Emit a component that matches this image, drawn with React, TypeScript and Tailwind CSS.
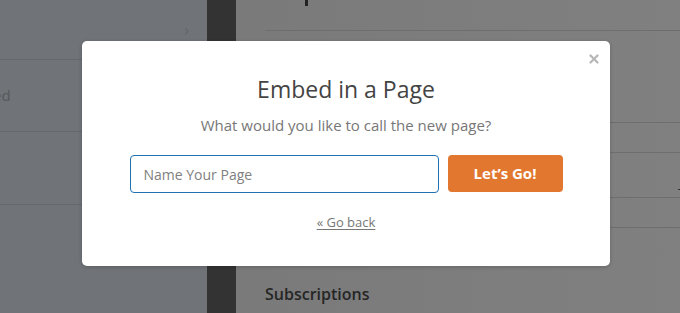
import { X } from 'lucide-react';

const font = { fontFamily: '"Open Sans", "Noto Sans", sans-serif' };

export default function App() {
  return (
    <div className="relative h-[313px] w-[680px] overflow-hidden" style={font}>
      {/* page behind the overlay */}
      <div className="flex h-full w-full">
        {/* left settings panel */}
        <div className="flex w-[207px] flex-col bg-[#707478]">
          <div className="flex h-[60px] items-center justify-end border-b border-[#65686c] pr-[18px]">
            <span className="text-[16px] leading-none text-[#60636a]">›</span>
          </div>
          <div className="flex h-[72px] items-center border-b border-[#65686c]">
            <span className="-ml-[7px] text-[15px] text-[#55585c]">ed</span>
          </div>
          <div className="h-[73px] border-b border-[#65686c]" />
          <div className="flex-1" />
        </div>

        {/* dark sidebar strip */}
        <div className="w-[29px] bg-[#333333]" />

        {/* right content */}
        <div className="flex flex-1 flex-col bg-gradient-to-r from-[#7a7a7a] to-[#808080]">
          <div className="ml-[29px] h-[31px] border-b border-[#6e6e6e]">
            <div className="ml-[40px] h-[6px] w-[3px] bg-[#222]" />
          </div>
          <div className="ml-[29px] h-[92px] border-b border-[#6e6e6e]" />
          <div className="ml-[29px] h-[30px] border-b border-[#6e6e6e]" />
          <div className="ml-[29px] flex h-[45px] items-center justify-end border-b border-[#6e6e6e]">
            <span className="mt-[28px] -mr-[2px] h-[1px] w-[4px] bg-[#333]" />
          </div>
          <div className="ml-[29px] h-[30px] border-b border-[#6e6e6e]" />
          <div className="ml-[29px] pt-[54px] text-[16px] font-semibold text-[#262626]">
            Subscriptions
          </div>
        </div>
      </div>

      {/* modal */}
      <div className="absolute left-[82px] top-[41px] flex h-[225px] w-[528px] flex-col items-center rounded-[5px] bg-white shadow-[0_1px_4px_rgba(0,0,0,0.2)]">
        <button className="absolute right-[9px] top-[11px] text-[#b8b8b8]">
          <X size={14} strokeWidth={4} />
        </button>
        <h2 className="mt-[32px] text-[23px] font-medium leading-[32px] text-[#444444]">Embed in a Page</h2>
        <p className="mt-[9px] text-[15px] leading-[22px] text-[#777777]">
          What would you like to call the new page?
        </p>
        <div className="mt-[19px] flex items-start gap-[9px]">
          <input
            className="h-[38px] w-[309px] rounded-[4px] border border-[#2271b1] px-[13px] text-[14px] text-[#444] outline-none placeholder:text-[#808080]"
            placeholder="Name Your Page"
          />
          <button className="h-[37px] w-[115px] rounded-[4px] bg-[#e27730] text-[15px] font-bold text-white">
            Let’s Go!
          </button>
        </div>
        <a className="mt-[20px] text-[13px] text-[#777777] underline underline-offset-2" href="#">
          « Go back
        </a>
      </div>
    </div>
  );
}
